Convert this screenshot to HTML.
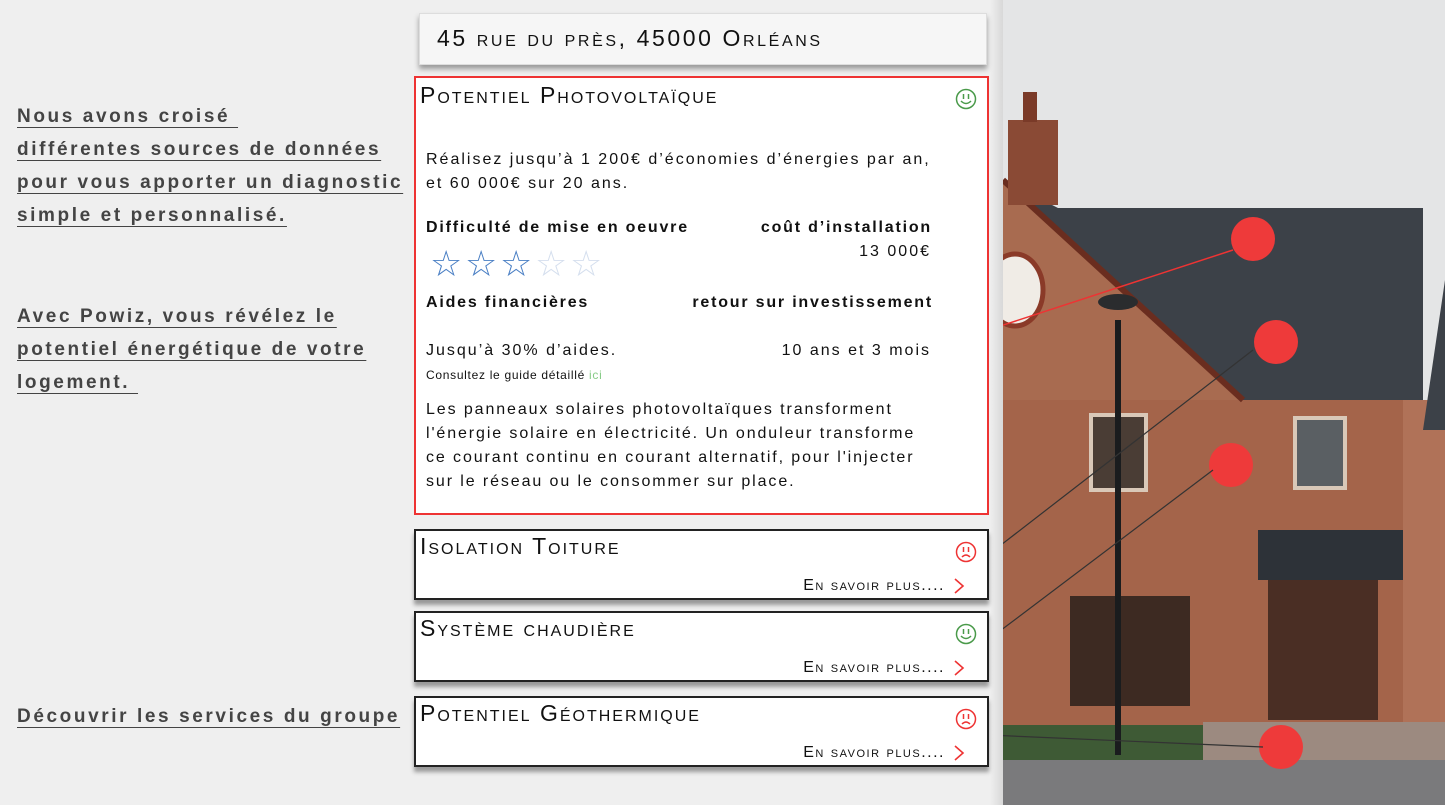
<!DOCTYPE html>
<html><head><meta charset="utf-8"><style>
*{margin:0;padding:0;box-sizing:border-box}
body{width:1445px;height:805px;background:#efefef;position:relative;overflow:hidden;font-family:"Liberation Sans",Arial,sans-serif;color:#111}
.lt{position:absolute;left:17px;font-weight:bold;font-size:19px;line-height:33px;color:#444;letter-spacing:2.6px}
.lt span{text-decoration:underline;text-decoration-thickness:1px;text-underline-offset:5px}
.addr{position:absolute;left:419px;top:13px;width:568px;height:52px;background:#f6f6f6;border:1px solid #ddd;box-shadow:0 4px 5px #999;font-size:23px;letter-spacing:2.6px;padding:11px 0 0 17px;font-variant:small-caps}
.card{position:absolute;left:414px;width:575px;background:#fff;border:2px solid #222;box-shadow:0 5px 4px #999}
.card h2{font-weight:normal;font-variant:small-caps;font-size:23px;letter-spacing:2px;position:absolute;left:4px;top:2px}
.more{position:absolute;right:42px;bottom:3px;font-variant:small-caps;font-size:16px;letter-spacing:1.5px}
.chev{position:absolute;right:22px;bottom:3px;width:12px;height:18px}
.sm{position:absolute;right:10px;top:10px}
.p{position:absolute;font-size:16px;letter-spacing:2px;line-height:24px}
.b{font-weight:bold;letter-spacing:1.8px}
.st{position:absolute;top:168px;font-size:36px;line-height:36px}
</style></head><body>
<div class="lt" style="top:100px"><span>Nous avons croisé&nbsp;</span><br><span>différentes sources de données</span><br><span>pour vous apporter un diagnostic</span><br><span>simple et personnalisé.</span></div>
<div class="lt" style="top:300px"><span>Avec Powiz, vous révélez le</span><br><span>potentiel énergétique de votre</span><br><span>logement.&nbsp;</span></div>
<div class="lt" style="top:700px"><span>Découvrir les services du groupe</span></div>

<div style="position:absolute;left:1003px;top:0;width:442px;height:805px;background:#e4e5e6;overflow:hidden">
<svg width="442" height="805" style="position:absolute;left:0;top:0">
<rect x="0" y="400" width="420" height="360" fill="#a4644a"/>
<polygon points="0,180 240,400 420,400 420,208 55,208" fill="#3c4148"/>
<polygon points="0,180 240,400 0,400" fill="#a86b50"/>
<line x1="0" y1="180" x2="240" y2="400" stroke="#6a2d1f" stroke-width="6"/>
<rect x="5" y="120" width="50" height="85" fill="#8a4a35"/>
<rect x="20" y="92" width="14" height="30" fill="#7a3a28"/>
<rect x="400" y="400" width="42" height="360" fill="#b07258"/>
<polygon points="420,430 442,280 442,430" fill="#3c4148"/>
<rect x="88" y="415" width="55" height="75" fill="#4a3d35" stroke="#d9c8b8" stroke-width="4"/>
<rect x="292" y="418" width="50" height="70" fill="#5a5f63" stroke="#d9c8b8" stroke-width="4"/>
<rect x="67" y="596" width="120" height="110" fill="#3d2a22"/>
<rect x="255" y="530" width="145" height="50" fill="#2d3238"/>
<rect x="265" y="580" width="110" height="140" fill="#4a2e24"/>
<ellipse cx="12" cy="290" rx="28" ry="36" fill="#f0ece6" stroke="#8a3a28" stroke-width="5"/>
<rect x="0" y="725" width="260" height="35" fill="#3e5a35"/>
<rect x="200" y="722" width="242" height="40" fill="#9c8a80"/>
<rect x="0" y="760" width="442" height="45" fill="#7a7a7c"/>
<rect x="112" y="320" width="6" height="435" fill="#1a1c1e"/>
<ellipse cx="115" cy="302" rx="20" ry="8" fill="#2a2c2e"/>
<g fill="#ee3a3a"><circle cx="250" cy="239" r="22"/><circle cx="273" cy="342" r="22"/><circle cx="228" cy="465" r="22"/><circle cx="278" cy="747" r="22"/></g>
<g stroke="#333" stroke-width="1.2"><line x1="-15" y1="555" x2="250" y2="350"/><line x1="-15" y1="640" x2="210" y2="470"/><line x1="-15" y1="735" x2="260" y2="747"/></g>
<line x1="-15" y1="330" x2="230" y2="250" stroke="#e33" stroke-width="1.5"/>
</svg></div>
<div style="position:absolute;left:990px;top:0;width:13px;height:805px;background:linear-gradient(90deg,#efefef,#d8d8d8)"></div>

<div class="addr">45 rue du près, 45000 Orléans</div>

<div class="card" style="top:76px;height:439px;border:2px solid #e33;box-shadow:none">
<h2 style="top:4px">Potentiel Photovoltaïque</h2>
<svg class="sm" width="22" height="22" viewBox="0 0 22 22"><circle cx="11" cy="11" r="9.5" fill="none" stroke="#4a9a4a" stroke-width="1.5"/><line x1="8.5" y1="6" x2="8.5" y2="11" stroke="#4a9a4a" stroke-width="1.5"/><line x1="13.5" y1="6" x2="13.5" y2="11" stroke="#4a9a4a" stroke-width="1.5"/><path d="M6 13 Q11 18 16 13" fill="none" stroke="#4a9a4a" stroke-width="1.5"/></svg>
<div class="p" style="left:10px;top:70px">Réalisez jusqu’à 1 200€ d’économies d’énergies par an,<br>et 60 000€ sur 20 ans.</div>
<div class="p b" style="left:10px;top:138px">Difficulté de mise en oeuvre</div>
<div class="p b" style="right:55px;top:138px;text-align:right">coût d’installation</div>
<div class="p" style="right:56px;top:162px">13 000€</div>
<span class="st" style="left:14px;color:#4a7fc4">☆</span><span class="st" style="left:49px;color:#4a7fc4">☆</span><span class="st" style="left:84px;color:#4a7fc4">☆</span><span class="st" style="left:119px;color:#d5dfee">☆</span><span class="st" style="left:154px;color:#d5dfee">☆</span>
<div class="p b" style="left:10px;top:213px">Aides financières</div>
<div class="p b" style="right:54px;top:213px">retour sur investissement</div>
<div class="p" style="left:10px;top:261px">Jusqu’à 30% d’aides.</div>
<div class="p" style="right:56px;top:261px">10 ans et 3 mois</div>
<div style="position:absolute;left:10px;top:290px;font-size:12px;letter-spacing:.7px">Consultez le guide détaillé <span style="color:#8c8">ici</span></div>
<div class="p" style="left:10px;top:320px;letter-spacing:1.9px">Les panneaux solaires photovoltaïques transforment<br>l'énergie solaire en électricité. Un onduleur transforme<br>ce courant continu en courant alternatif, pour l'injecter<br>sur le réseau ou le consommer sur place.</div>
</div>

<div class="card" style="top:529px;height:71px"><h2>Isolation Toiture</h2>
<svg class="sm" width="22" height="22" viewBox="0 0 22 22"><circle cx="11" cy="11" r="9.5" fill="none" stroke="#e33" stroke-width="1.5"/><line x1="8.5" y1="6" x2="8.5" y2="11" stroke="#e33" stroke-width="1.5"/><line x1="13.5" y1="6" x2="13.5" y2="11" stroke="#e33" stroke-width="1.5"/><path d="M7 16 Q11 12 15 16" fill="none" stroke="#e33" stroke-width="1.5"/></svg>
<div class="more">En savoir plus....</div><svg class="chev" viewBox="0 0 12 18"><path d="M2 2 L10 9 L2 16" fill="none" stroke="#e33" stroke-width="1.6"/></svg></div>
<div class="card" style="top:611px;height:71px"><h2>Système chaudière</h2>
<svg class="sm" width="22" height="22" viewBox="0 0 22 22"><circle cx="11" cy="11" r="9.5" fill="none" stroke="#4a9a4a" stroke-width="1.5"/><line x1="8.5" y1="6" x2="8.5" y2="11" stroke="#4a9a4a" stroke-width="1.5"/><line x1="13.5" y1="6" x2="13.5" y2="11" stroke="#4a9a4a" stroke-width="1.5"/><path d="M6 13 Q11 18 16 13" fill="none" stroke="#4a9a4a" stroke-width="1.5"/></svg>
<div class="more">En savoir plus....</div><svg class="chev" viewBox="0 0 12 18"><path d="M2 2 L10 9 L2 16" fill="none" stroke="#e33" stroke-width="1.6"/></svg></div>
<div class="card" style="top:696px;height:71px"><h2>Potentiel Géothermique</h2>
<svg class="sm" width="22" height="22" viewBox="0 0 22 22"><circle cx="11" cy="11" r="9.5" fill="none" stroke="#e33" stroke-width="1.5"/><line x1="8.5" y1="6" x2="8.5" y2="11" stroke="#e33" stroke-width="1.5"/><line x1="13.5" y1="6" x2="13.5" y2="11" stroke="#e33" stroke-width="1.5"/><path d="M7 16 Q11 12 15 16" fill="none" stroke="#e33" stroke-width="1.5"/></svg>
<div class="more">En savoir plus....</div><svg class="chev" viewBox="0 0 12 18"><path d="M2 2 L10 9 L2 16" fill="none" stroke="#e33" stroke-width="1.6"/></svg></div>
</body></html>
